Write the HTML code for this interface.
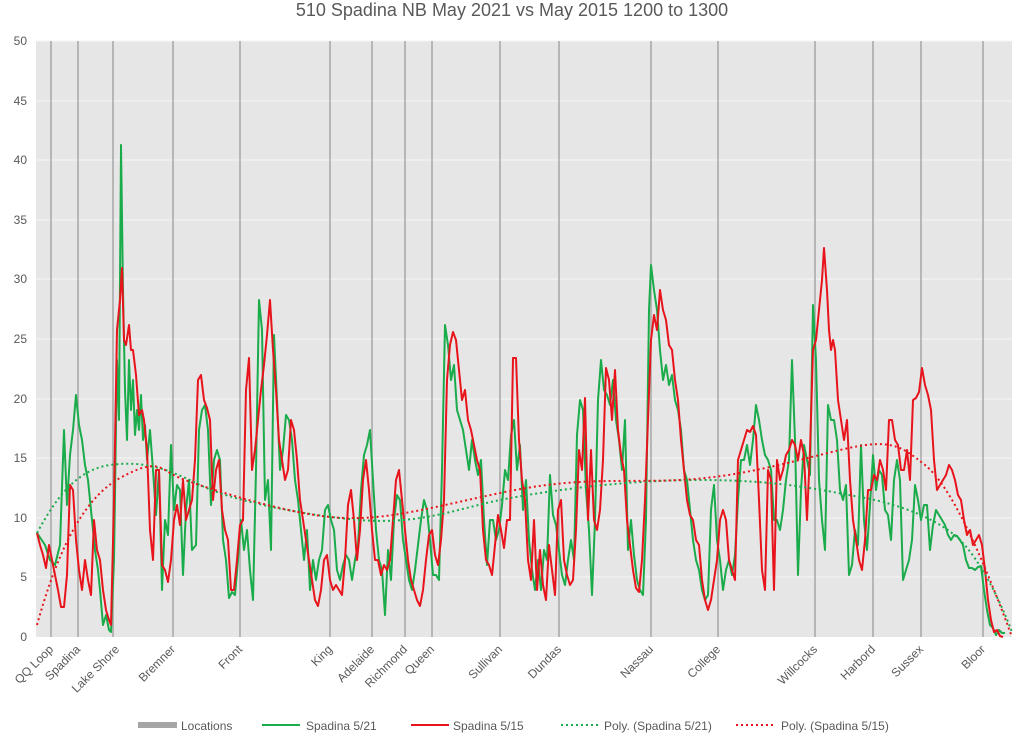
<!DOCTYPE html>
<html><head><meta charset="utf-8"><style>
html,body{margin:0;padding:0;background:#fff;}
svg{display:block;font-family:"Liberation Sans",sans-serif;}
</style></head><body>
<svg width="1024" height="742" viewBox="0 0 1024 742" xmlns="http://www.w3.org/2000/svg">
<text x="512" y="16" text-anchor="middle" font-size="18" fill="#595959">510 Spadina NB May 2021 vs May 2015 1200 to 1300</text>
<rect x="36" y="41" width="976" height="596" fill="#e7e6e6"/>
<g stroke="#f5f5f5" stroke-width="1">
<line x1="36" y1="41" x2="1012" y2="41"/><line x1="36" y1="101" x2="1012" y2="101"/><line x1="36" y1="160" x2="1012" y2="160"/><line x1="36" y1="220" x2="1012" y2="220"/><line x1="36" y1="279" x2="1012" y2="279"/><line x1="36" y1="339" x2="1012" y2="339"/><line x1="36" y1="399" x2="1012" y2="399"/><line x1="36" y1="458" x2="1012" y2="458"/><line x1="36" y1="518" x2="1012" y2="518"/><line x1="36" y1="577" x2="1012" y2="577"/>
</g>
<g stroke="#a6a6a6" stroke-width="1.5">
<line x1="51" y1="41" x2="51" y2="637"/><line x1="78" y1="41" x2="78" y2="637"/><line x1="113" y1="41" x2="113" y2="637"/><line x1="173" y1="41" x2="173" y2="637"/><line x1="240" y1="41" x2="240" y2="637"/><line x1="330" y1="41" x2="330" y2="637"/><line x1="372" y1="41" x2="372" y2="637"/><line x1="405" y1="41" x2="405" y2="637"/><line x1="432" y1="41" x2="432" y2="637"/><line x1="500" y1="41" x2="500" y2="637"/><line x1="559" y1="41" x2="559" y2="637"/><line x1="651" y1="41" x2="651" y2="637"/><line x1="718" y1="41" x2="718" y2="637"/><line x1="815" y1="41" x2="815" y2="637"/><line x1="873" y1="41" x2="873" y2="637"/><line x1="921" y1="41" x2="921" y2="637"/><line x1="983" y1="41" x2="983" y2="637"/>
</g>
<g font-size="12" fill="#595959" text-anchor="end">
<text x="27" y="45">50</text><text x="27" y="105">45</text><text x="27" y="164">40</text><text x="27" y="224">35</text><text x="27" y="283">30</text><text x="27" y="343">25</text><text x="27" y="403">20</text><text x="27" y="462">15</text><text x="27" y="522">10</text><text x="27" y="581">5</text><text x="27" y="641">0</text>
</g>
<polyline fill="none" stroke="#1aab4b" stroke-width="2" stroke-linejoin="round" points="37,533 45,545 50,560 55,565 60,545 64,430 67,505 70,455 73,430 76,395 79,425 82,440 85,465 88,480 92,520 95,550 98,570 100,590 103,625 106,615 109,630 111,632 114,560 117,360 119,420 121,145 123,290 125,390 127,440 129,360 131,410 133,380 135,435 137,410 139,430 141,395 143,440 145,425 147,460 150,430 153,470 156,515 159,470 162,590 165,520 168,535 171,445 174,510 177,485 180,490 183,575 186,510 189,480 192,550 196,545 199,430 202,410 205,405 208,430 211,505 214,460 217,450 220,460 223,540 226,560 229,598 232,592 235,595 238,560 241,520 244,550 247,530 250,570 253,600 256,470 259,300 262,330 265,500 268,480 271,550 274,335 277,400 280,470 283,450 286,415 289,420 292,440 295,480 298,500 301,530 304,560 307,530 310,590 313,560 316,580 319,560 322,550 325,510 328,505 331,520 334,530 337,570 340,580 343,565 346,555 349,560 352,580 355,560 358,545 361,490 364,455 367,445 370,430 373,480 376,530 379,560 382,570 385,615 388,550 391,580 394,520 397,495 400,500 403,540 406,560 409,580 412,590 415,570 418,545 421,520 424,500 427,510 430,540 433,575 436,575 439,580 442,470 445,325 448,345 451,380 454,365 457,410 460,420 463,430 466,450 469,470 472,440 475,460 478,475 481,460 484,520 487,565 490,520 493,520 496,540 499,530 502,505 505,470 508,480 511,435 514,420 517,470 520,445 523,510 526,480 529,540 532,570 535,590 538,560 541,590 544,550 547,560 550,475 553,515 556,525 559,550 562,575 565,585 568,560 571,540 574,560 577,435 580,400 583,410 586,490 589,530 592,595 595,520 598,400 601,360 604,390 607,395 610,405 613,380 616,420 619,440 622,470 625,420 628,550 631,520 634,555 637,580 640,590 643,595 646,520 649,310 651,265 654,290 657,310 660,350 663,380 666,365 669,385 672,375 675,400 678,410 681,430 684,470 687,480 690,510 693,540 696,560 699,570 702,590 705,600 708,595 711,510 714,485 717,540 720,560 723,590 726,570 729,560 732,575 735,555 738,500 741,460 744,460 747,445 750,465 753,440 756,405 759,420 762,440 765,455 768,460 771,470 774,520 777,520 780,530 783,510 786,480 789,460 792,360 795,440 798,575 801,490 804,445 807,460 810,475 813,305 816,360 819,480 822,520 825,550 828,405 831,420 834,420 837,440 840,490 843,500 846,485 849,575 852,565 855,530 858,545 861,445 864,520 867,550 870,505 873,455 876,490 879,470 882,475 885,510 888,515 891,540 894,480 897,460 900,480 903,580 906,570 909,560 912,540 915,485 918,500 921,520 924,505 927,505 930,550 933,525 936,510 939,515 942,520 945,525 948,535 951,540 954,535 957,536 960,540 963,545 966,560 969,568 972,568 975,570 978,567 981,566 984,590 987,610 990,625 993,628 996,635 999,630 1002,633 1005,633"/>
<polyline fill="none" stroke="#e8141c" stroke-width="2" stroke-linejoin="round" points="37,533 40,545 43,555 46,568 49,545 52,560 55,575 58,590 61,607 64,607 67,575 70,485 73,490 76,540 79,570 82,590 85,560 88,580 91,595 94,520 97,550 100,560 103,590 106,610 109,620 111,625 114,500 117,330 120,300 122,268 124,340 126,345 129,325 131,350 133,350 136,375 139,415 142,410 144,420 147,450 150,530 153,560 156,470 159,470 162,565 165,570 168,582 171,560 174,520 177,505 180,525 183,480 186,520 189,510 192,500 195,460 198,380 201,375 204,400 207,408 210,420 213,500 216,470 219,460 222,510 225,530 228,540 231,590 234,590 237,560 240,525 243,520 246,390 249,358 252,470 255,450 258,420 261,390 264,365 267,335 270,300 273,350 276,390 279,440 282,460 285,480 288,470 291,420 294,430 297,460 300,500 303,520 306,540 309,560 312,580 315,600 318,606 321,590 324,560 327,555 330,580 333,590 336,585 339,590 342,595 345,560 348,505 351,490 354,520 357,560 360,530 363,480 366,460 369,490 372,530 375,560 378,560 381,575 384,565 387,570 390,560 393,520 396,480 399,470 402,500 405,530 408,560 411,580 414,590 417,600 420,606 423,590 426,560 429,535 432,530 435,555 438,565 441,540 444,500 447,380 450,345 453,332 456,340 459,370 462,400 465,390 468,420 471,430 474,445 477,460 480,470 483,530 486,560 489,565 492,575 495,545 498,515 501,530 504,548 507,520 510,520 513,358 516,358 519,440 522,480 525,500 528,560 531,580 534,520 537,590 540,550 543,585 546,600 549,545 552,570 555,595 558,510 561,500 564,560 567,575 570,585 573,580 576,530 579,450 582,470 585,398 588,520 591,450 594,520 597,530 600,510 603,460 606,368 609,380 612,420 615,370 618,430 621,455 624,470 627,520 630,545 633,570 636,588 639,592 642,560 645,500 648,420 651,340 654,315 657,330 660,290 663,310 666,320 669,345 672,350 675,380 678,400 681,440 684,470 687,500 690,515 693,520 696,540 699,545 702,580 705,600 708,610 711,600 714,580 717,560 720,520 723,510 726,520 729,560 732,570 735,580 738,460 741,450 744,440 747,430 750,432 753,426 756,435 759,500 762,570 765,590 768,470 771,480 774,590 777,460 780,480 783,470 786,455 789,450 792,440 795,445 798,460 801,440 804,455 807,520 810,450 813,350 816,340 819,310 822,280 824,248 827,290 829,330 831,350 833,340 835,350 838,400 841,420 844,440 847,420 850,480 853,520 856,540 859,560 862,570 865,540 868,490 871,490 874,475 877,480 880,460 883,470 886,490 889,420 892,420 895,440 898,445 901,470 904,470 907,450 910,480 913,400 916,398 919,392 922,368 925,385 928,395 931,410 934,460 937,490 940,485 943,480 946,475 949,465 952,470 955,480 958,495 961,500 964,520 967,535 970,530 973,545 976,540 979,535 982,545 985,570 988,600 991,620 994,632 997,630 1000,636 1003,637"/>
<path fill="none" stroke="#1aab4b" stroke-width="2" stroke-dasharray="2,3" d="M37,533 C55,500 75,470 110,465 S170,470 200,485 S300,515 360,520 S460,508 500,500 S620,480 700,480 S820,490 860,497 S940,520 960,540 S1000,600 1012,632"/>
<path fill="none" stroke="#e8141c" stroke-width="2" stroke-dasharray="2,3" d="M37,625 C55,560 80,500 120,478 S160,470 180,478 S280,512 330,517 S420,510 500,493 S620,483 680,480 S790,462 840,450 S900,445 925,465 S980,550 1012,637"/>
<g font-size="12" fill="#595959" text-anchor="end">
<text transform="translate(54,650) rotate(-45)">QQ Loop</text>
<text transform="translate(81,650) rotate(-45)">Spadina</text>
<text transform="translate(120,650) rotate(-45)">Lake Shore</text>
<text transform="translate(176,650) rotate(-45)">Bremner</text>
<text transform="translate(243,650) rotate(-45)">Front</text>
<text transform="translate(333,650) rotate(-45)">King</text>
<text transform="translate(375,650) rotate(-45)">Adelaide</text>
<text transform="translate(408,650) rotate(-45)">Richmond</text>
<text transform="translate(435,650) rotate(-45)">Queen</text>
<text transform="translate(503,650) rotate(-45)">Sullivan</text>
<text transform="translate(562,650) rotate(-45)">Dundas</text>
<text transform="translate(654,650) rotate(-45)">Nassau</text>
<text transform="translate(721,650) rotate(-45)">College</text>
<text transform="translate(818,650) rotate(-45)">Willcocks</text>
<text transform="translate(876,650) rotate(-45)">Harbord</text>
<text transform="translate(924,650) rotate(-45)">Sussex</text>
<text transform="translate(986,650) rotate(-45)">Bloor</text>
</g>
<g font-size="12" fill="#595959">
<rect x="138" y="722" width="39" height="6" fill="#a6a6a6"/><text x="181" y="730">Locations</text>
<line x1="262" y1="725" x2="300" y2="725" stroke="#1aab4b" stroke-width="2"/><text x="306" y="730">Spadina 5/21</text>
<line x1="411" y1="725" x2="449" y2="725" stroke="#e8141c" stroke-width="2"/><text x="453" y="730">Spadina 5/15</text>
<line x1="561" y1="725" x2="600" y2="725" stroke="#1aab4b" stroke-width="2" stroke-dasharray="2,3"/><text x="604" y="730">Poly. (Spadina 5/21)</text>
<line x1="736" y1="725" x2="774" y2="725" stroke="#e8141c" stroke-width="2" stroke-dasharray="2,3"/><text x="781" y="730">Poly. (Spadina 5/15)</text>
</g>
</svg>
</body></html>
